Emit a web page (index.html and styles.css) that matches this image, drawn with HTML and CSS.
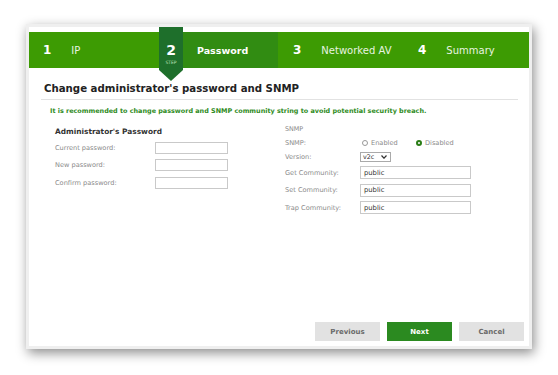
FILE: index.html
```html
<!DOCTYPE html>
<html>
<head>
<meta charset="utf-8">
<link rel="stylesheet" href="styles.css">
</head>
<body>
<div class="card">
  <div class="steps">
    <div class="step s1"><span class="num">1</span><span class="name">IP</span></div>
    <div class="step s2">
      <div class="tab"><span class="tnum">2</span><span class="tstep">STEP</span></div>
      <span class="name bold">Password</span>
    </div>
    <div class="step s3"><span class="num">3</span><span class="name">Networked AV</span></div>
    <div class="step s4"><span class="num">4</span><span class="name">Summary</span></div>
  </div>
  <h1 class="title">Change administrator's password and SNMP</h1>
  <p class="notice">It is recommended to change password and SNMP community string to avoid potential security breach.</p>
  <div class="cols">
    <div class="col left">
      <div class="sechead">Administrator's Password</div>
      <div class="row"><span class="lbl">Current password:</span><span class="inp pw"></span></div>
      <div class="row"><span class="lbl">New password:</span><span class="inp pw"></span></div>
      <div class="row"><span class="lbl">Confirm password:</span><span class="inp pw"></span></div>
    </div>
    <div class="col right">
      <div class="sechead2">SNMP</div>
      <div class="rrow r-snmp"><span class="lbl2">SNMP:</span>
        <span class="radio"><span class="rb"></span>Enabled</span>
        <span class="radio"><span class="rb on"></span>Disabled</span>
      </div>
      <div class="rrow r-ver"><span class="lbl2">Version:</span>
        <span class="sel">v2c <svg width="6" height="4" viewBox="0 0 6 4"><path d="M0.5 0.5 L3 3.2 L5.5 0.5" fill="none" stroke="#333" stroke-width="1.2"/></svg></span>
      </div>
      <div class="rrow"><span class="lbl2">Get Community:</span><span class="inp com">public</span></div>
      <div class="rrow"><span class="lbl2">Set Community:</span><span class="inp com">public</span></div>
      <div class="rrow"><span class="lbl2">Trap Community:</span><span class="inp com">public</span></div>
    </div>
  </div>
  <div class="buttons">
    <span class="btn grey">Previous</span>
    <span class="btn next">Next</span>
    <span class="btn grey">Cancel</span>
  </div>
</div>
</body>
</html>
```
FILE: styles.css
```css
html, body { margin: 0; padding: 0; background: #fff; }
body { font-family: "DejaVu Sans", "Liberation Sans", sans-serif; width: 558px; height: 375px; overflow: hidden; }
.card {
  margin: 24px 0 0 26px;
  width: 506px; height: 325px;
  box-sizing: border-box;
  border: 3px solid #efefef;
  background: #fff;
  box-shadow: 2px 4px 11px rgba(0,0,0,0.45);
  display: flex; flex-direction: column;
}
.steps {
  margin-top: 5px;
  height: 36px;
  background: #3d9b03;
  display: flex; align-items: center;
  color: #fff;
}
.step { display: flex; align-items: center; height: 100%; }
.num { font-weight: bold; font-size: 12px; }
.name { font-size: 10px; color: #e8f4e0; }
.name.bold { font-weight: bold; color: #fff; font-size: 9.5px; }
.s1 { width: 130px; padding-left: 14px; box-sizing: border-box; }
.s1 .num { margin-right: 20px; }
.s2 { width: 119px; background: #318c12; }
.tab {
  position: relative;
  width: 24px; height: 43px; margin-top: -5px; align-self: flex-start;
  background: #1e6f2b; margin-right: 14px;
  display: flex; flex-direction: column; align-items: center; padding-top: 16px; box-sizing: border-box;
}
.tab::after {
  content: ""; position: absolute; left: 0; top: 43px;
  border-left: 12px solid transparent; border-right: 12px solid transparent;
  border-top: 11px solid #1e6f2b;
}
.tnum { font-weight: bold; font-size: 14px; line-height: 14px; }
.tstep { font-size: 4.5px; color: #bfe0b8; margin-top: 3px; }
.s3 { width: 125px; padding-left: 15px; box-sizing: border-box; }
.s3 .num, .s4 .num { margin-right: 20px; }
.s4 { padding-left: 15px; }
.title {
  margin: 15px 11px 0 12px;
  padding: 0 0 5px 3px;
  font-size: 10.2px; font-weight: bold; color: #222;
  border-bottom: 1px solid #e2e2e2;
}
.notice { margin: 7px 0 0 21px; font-size: 6.45px; font-weight: bold; color: #2e8b22; }
.cols { display: flex; margin-top: 10px; }
.col.left { width: 230px; padding-left: 26px; box-sizing: border-box; }
.col.right { padding-left: 26px; }
.sechead { font-size: 7.4px; font-weight: bold; color: #333; margin-top: 2px; margin-bottom: 3px; }
.row { display: flex; align-items: center; height: 17.5px; }
.lbl { width: 100px; font-size: 6.6px; color: #8a8a8a; }
.inp { display: block; box-sizing: border-box; border: 1px solid #c9c9c9; height: 12px; background: #fff; }
.pw { width: 73px; }
.sechead2 { font-size: 6.4px; color: #8a8a8a; margin-bottom: 3px; }
.rrow { display: flex; align-items: center; height: 17.5px; }
.r-snmp { height: 13px; }
.r-ver { height: 15px; }
.lbl2 { width: 77px; font-size: 6.6px; color: #8a8a8a; }
.radio { display: flex; align-items: center; font-size: 6.6px; color: #8a8a8a; width: 54px; }
.rb { width: 6px; height: 6px; border: 1px solid #999; border-radius: 50%; margin-right: 3px; box-sizing: border-box; }
.rb.on { border: 2px solid #2a7d16; }
.sel { display: flex; align-items: center; justify-content: space-between; box-sizing: border-box; width: 31px; height: 10px; border: 1px solid #aaa; font-size: 6.4px; color: #333; padding: 0 3px 0 2px; margin-left: -2px; }
.com { width: 111px; height: 13px; font-size: 6.8px; color: #333; padding-left: 3px; display: flex; align-items: center; margin-left: -2px; }
.buttons { margin-top: auto; margin-bottom: 5px; display: flex; justify-content: flex-end; gap: 7px; padding-right: 5px; }
.btn { width: 65px; height: 19px; display: flex; align-items: center; justify-content: center; font-size: 7px; font-weight: bold; }
.grey { background: #e2e2e2; color: #6a6a6a; }
.next { background: #2b8a20; color: #fff; }
```
